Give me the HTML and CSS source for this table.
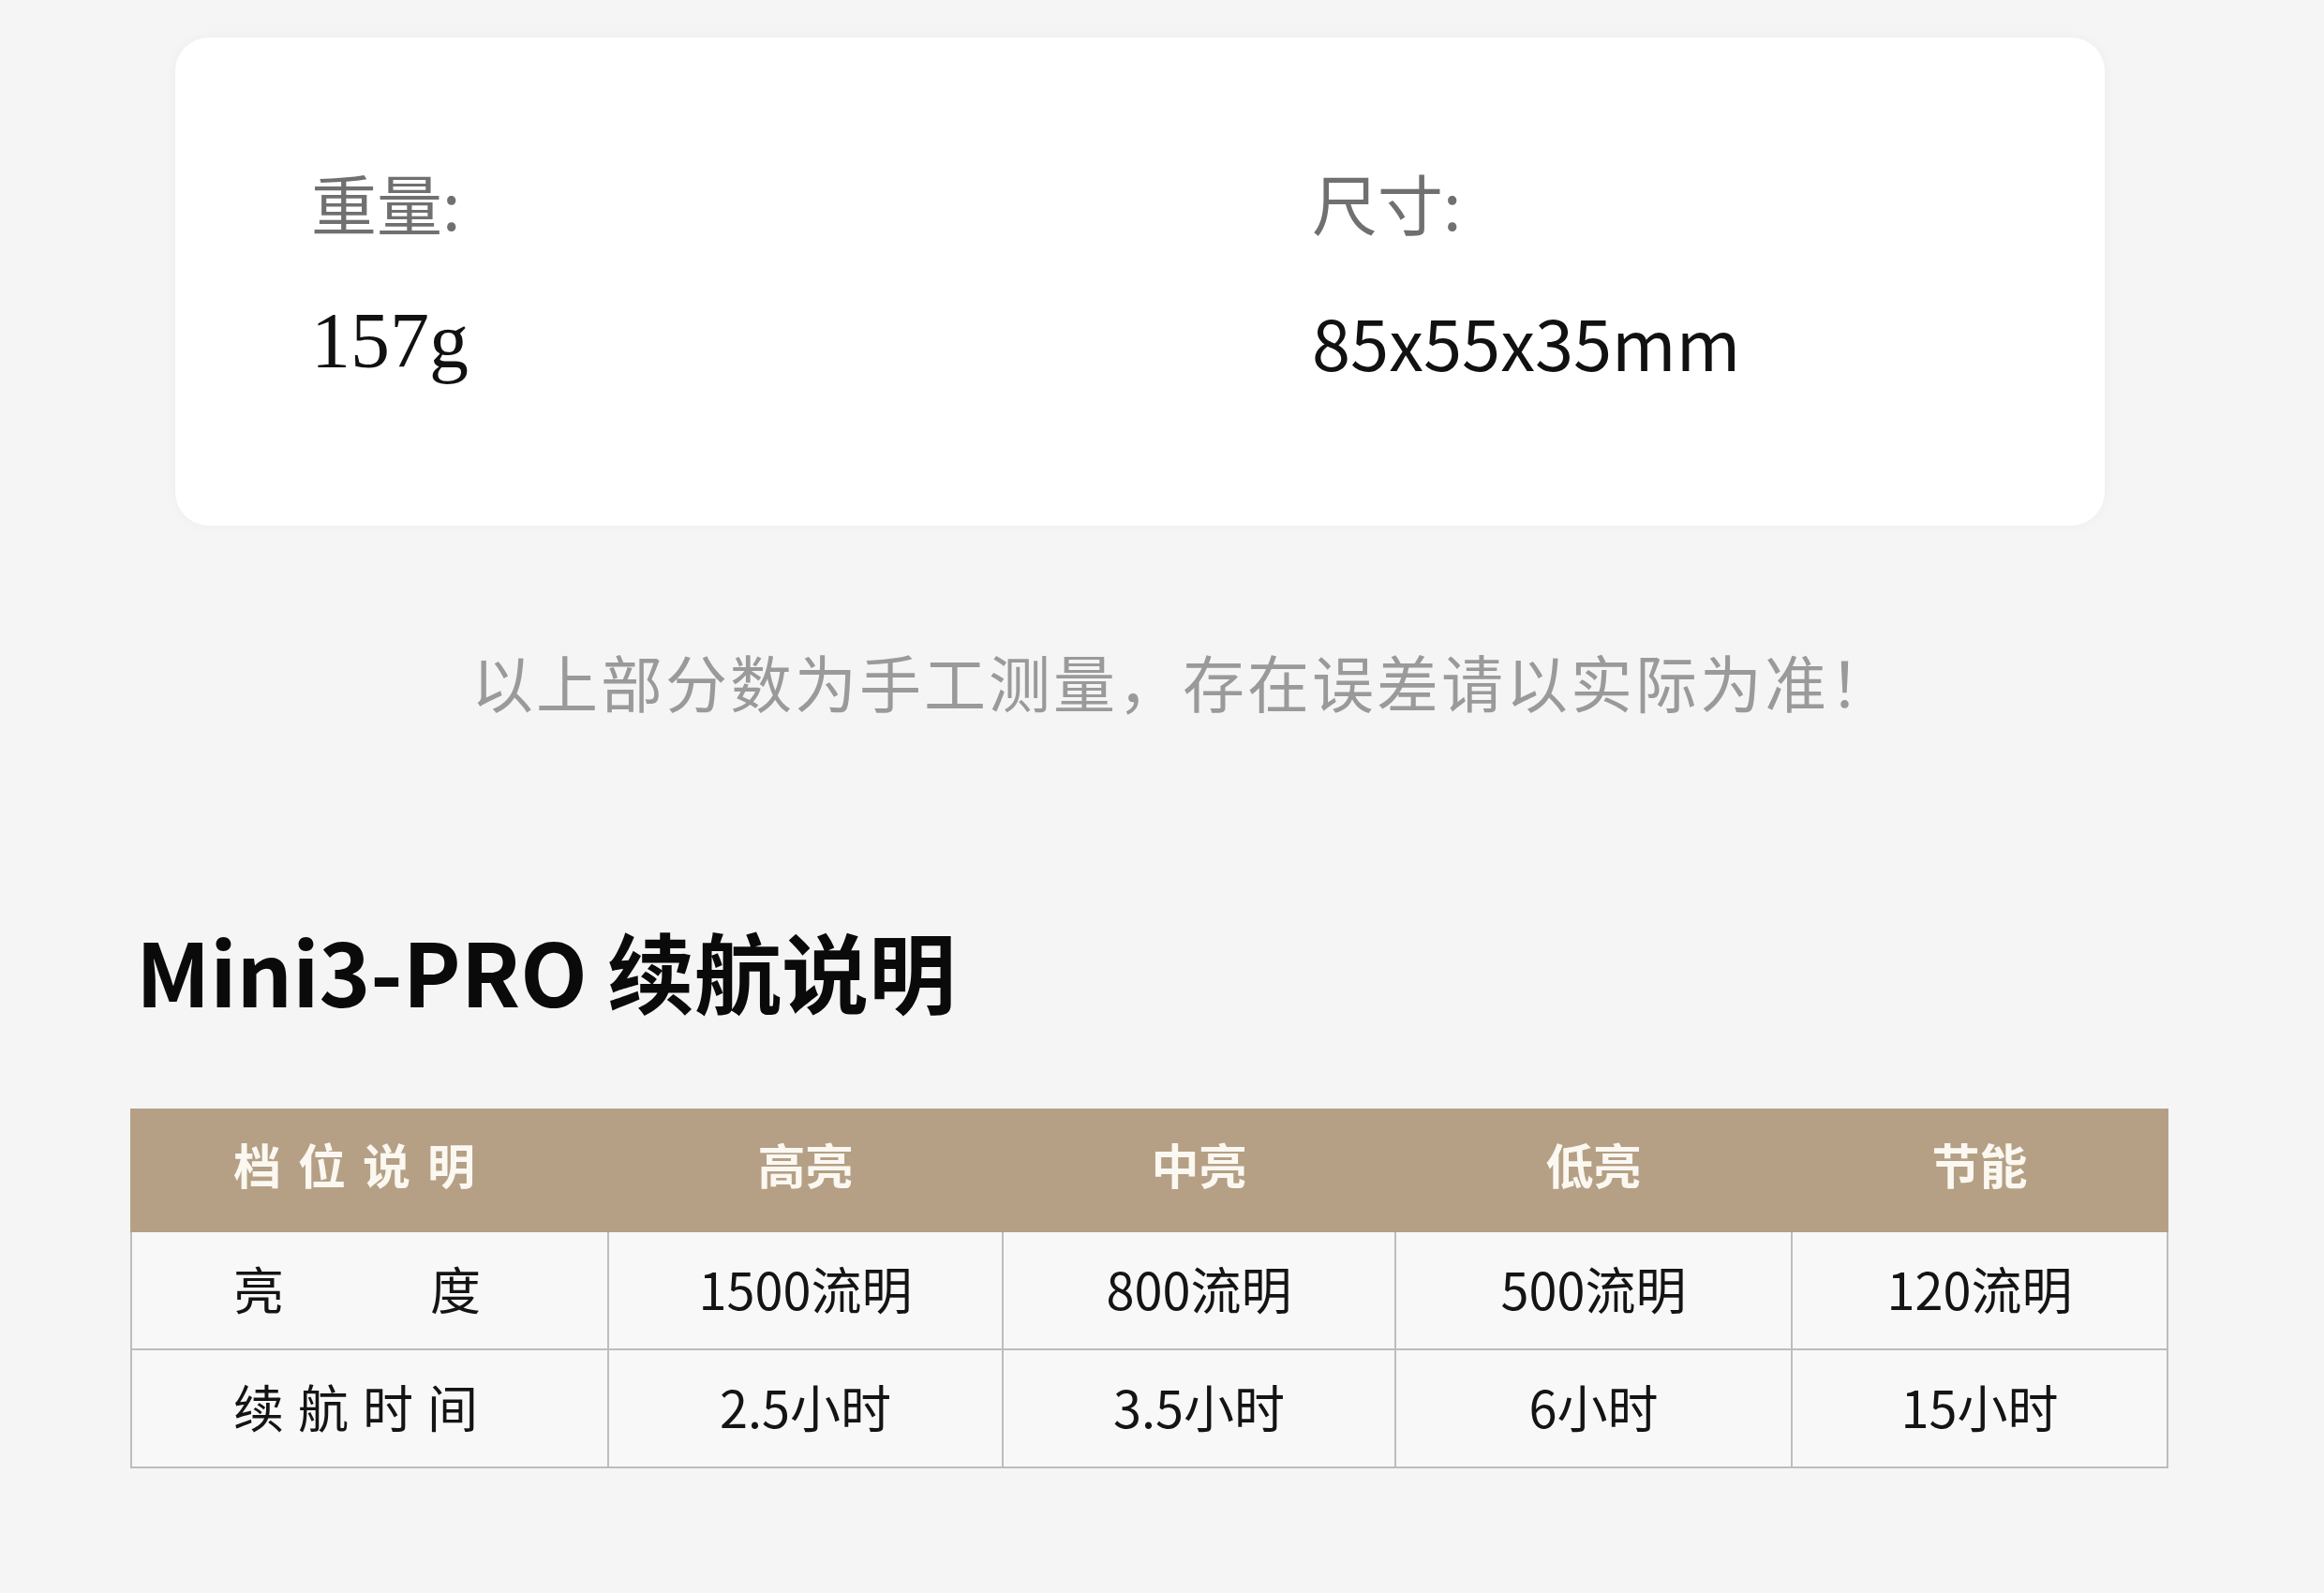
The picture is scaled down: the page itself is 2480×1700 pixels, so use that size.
FILE: index.html
```html
<!DOCTYPE html>
<html lang="zh-CN">
<head>
<meta charset="utf-8">
<title>Mini3-PRO</title>
<link rel="stylesheet" href="styles.css">
</head>
<body>
<div class="page">
  <section class="spec-card">
    <div class="spec">
      <div class="spec-label">重量:</div>
      <div class="spec-value serif">157g</div>
    </div>
    <div class="spec">
      <div class="spec-label">尺寸:</div>
      <div class="spec-value">85x55x35mm</div>
    </div>
  </section>

  <p class="note">以上部分数为手工测量，存在误差请以实际为准！</p>

  <h2 class="title">Mini3-PRO 续航说明</h2>

  <table class="runtime">
    <colgroup>
      <col class="c1"><col class="c2"><col class="c3"><col class="c4"><col class="c5">
    </colgroup>
    <thead>
      <tr>
        <th class="first spaced">档位说明</th>
        <th>高亮</th>
        <th>中亮</th>
        <th>低亮</th>
        <th>节能</th>
      </tr>
    </thead>
    <tbody>
      <tr>
        <td class="first"><span class="split"><span>亮</span><span>度</span></span></td>
        <td>1500流明</td>
        <td>800流明</td>
        <td>500流明</td>
        <td>120流明</td>
      </tr>
      <tr>
        <td class="first spaced tight">续航时间</td>
        <td>2.5小时</td>
        <td>3.5小时</td>
        <td>6小时</td>
        <td>15小时</td>
      </tr>
    </tbody>
  </table>
</div>
</body>
</html>
```

FILE: styles.css
```css
html, body {
  margin: 0;
  padding: 0;
  background: #f5f5f5;
}

body {
  font-family: "Noto Sans CJK SC", "Noto Sans", sans-serif;
  color: #111;
}

.page {
  width: 2480px;
  padding-top: 40px;
  padding-bottom: 120px;
}

.spec-card {
  margin-left: 187px;
  width: 2059px;
  height: 521px;
  box-sizing: border-box;
  padding: 134px 0 0 145px;
  background: #ffffff;
  border-radius: 36px;
  box-shadow: 0 0 14px rgba(0, 0, 0, 0.035);
  display: flex;
}

.spec {
  width: 1068px;
  flex: 0 0 auto;
}

.spec-label {
  font-size: 70px;
  line-height: 84px;
  color: #707070;
}

.spec-value {
  margin-top: 56px;
  font-size: 74px;
  line-height: 100px;
  color: #111;
}

.spec-value.serif {
  font-family: "Liberation Serif", "Noto Serif CJK SC", serif;
  font-size: 84px;
}

.note {
  margin: 120px 0 0 0;
  text-align: center;
  font-size: 66px;
  line-height: 90px;
  color: #9a9a9a;
  letter-spacing: 3px;
  padding-left: 44px;
}

.title {
  margin: 204px 0 0 145px;
  font-size: 93px;
  line-height: 120px;
  font-weight: 700;
  color: #0a0a0a;
}

.runtime {
  margin: 88px 0 0 139px;
  width: 2173px;
  border-collapse: collapse;
  table-layout: fixed;
  font-size: 54px;
}

.c1 { width: 509px; }
.c2 { width: 421px; }
.c3 { width: 419px; }
.c4 { width: 423px; }
.c5 { width: 401px; }

.runtime th {
  height: 130px;
  box-sizing: border-box;
  background: #b5a085;
  color: #fbf8f2;
  font-weight: 700;
  font-size: 51px;
  text-align: center;
  padding: 0 0 14px 0;
  border: 2px solid #b5a085;
}

.runtime td {
  height: 126px;
  box-sizing: border-box;
  background: #f8f8f8;
  color: #141414;
  text-align: center;
  padding: 0 0 6px 0;
  border: 2px solid #bdbdbd;
}

.runtime .first {
  text-align: left;
  padding-left: 108px;
}

.spaced {
  letter-spacing: 18px;
}

.spaced.tight {
  letter-spacing: 15px;
}

.split {
  display: flex;
  width: 264px;
  justify-content: space-between;
}
```
